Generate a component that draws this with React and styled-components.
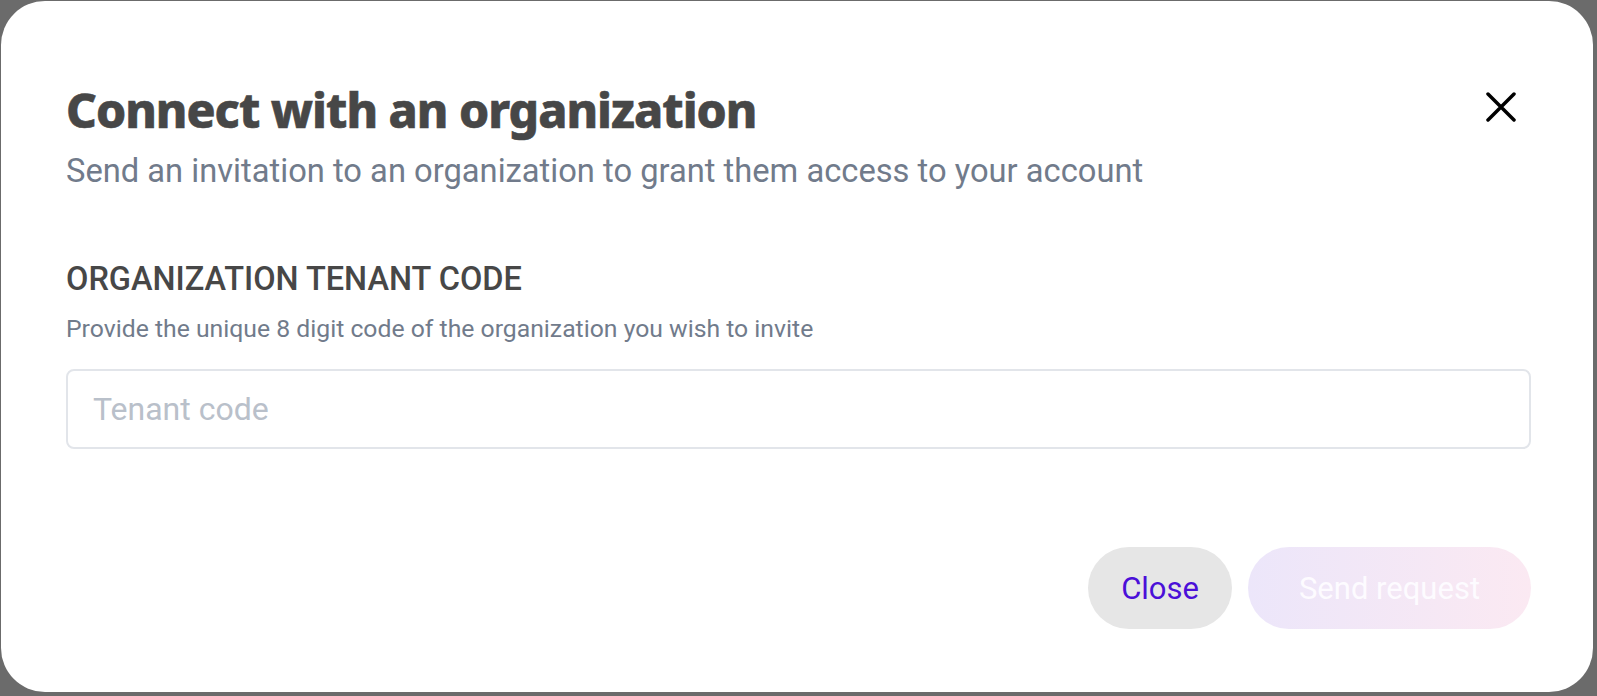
import styled, { createGlobalStyle } from "styled-components";

const GlobalStyle = createGlobalStyle`
  html, body {
    margin: 0;
    padding: 0;
    background: #6b6b6b;
  }
  * {
    box-sizing: border-box;
  }
`;

const Page = styled.div`
  width: 1597px;
  height: 696px;
  padding: 1px 4px 4px 1px;
`;

const Card = styled.div`
  width: 100%;
  height: 100%;
  background: #ffffff;
  border-radius: 44px;
  padding: 80px 62px 0 65px;
  display: flex;
  flex-direction: column;
  font-family: Roboto, "Noto Sans", sans-serif;
`;

const Header = styled.div`
  display: flex;
  justify-content: space-between;
  align-items: flex-start;
`;

const Titles = styled.div`
  display: flex;
  flex-direction: column;
`;

const Title = styled.h1`
  margin: 0;
  font-family: "Noto Sans", sans-serif;
  font-weight: 800;
  font-size: 48px;
  line-height: 58px;
  letter-spacing: -1px;
  color: #474747;
  -webkit-text-stroke: 0.6px #474747;
`;

const Subtitle = styled.p`
  margin: 13px 0 0;
  font-size: 32.7px;
  line-height: 38px;
  color: #717b8b;
`;

const IconButton = styled.button`
  width: 60px;
  height: 60px;
  margin-top: -4px;
  padding: 0;
  border: none;
  background: transparent;
  display: flex;
  align-items: center;
  justify-content: center;
  cursor: pointer;
`;

const Label = styled.label`
  margin-top: 70px;
  font-size: 32.5px;
  font-weight: 500;
  line-height: 38px;
  color: #474747;
`;

const Helper = styled.p`
  margin: 16px 0 0;
  font-size: 24.75px;
  line-height: 30px;
  color: #717b8b;
`;

const Input = styled.input`
  margin-top: 25px;
  width: 100%;
  height: 80px;
  border: 2px solid #e2e5ea;
  border-radius: 8px;
  padding: 0 25px;
  font-family: Roboto, sans-serif;
  font-size: 32px;
  color: #333;
  outline: none;

  &::placeholder {
    color: #b9c0ca;
  }
`;

const Actions = styled.div`
  margin-top: 98px;
  display: flex;
  justify-content: flex-end;
  gap: 16px;
`;

const Button = styled.button`
  height: 82px;
  min-width: ${(p) => (p.$primary ? "283px" : "0")};
  padding: 0 33px;
  border: none;
  border-radius: 41px;
  font-family: Roboto, sans-serif;
  font-size: 31px;
  cursor: pointer;
  color: ${(p) => (p.$primary ? "#fdfbff" : "#4b0fd8")};
  background: ${(p) =>
    p.$primary
      ? "linear-gradient(90deg, #ece6fa 0%, #fbe9f2 100%)"
      : "#e6e6e6"};
`;

const CloseIcon = () => (
  <svg width="30" height="30" viewBox="0 0 30 30" fill="none">
    <path
      d="M2 2 L28 28 M28 2 L2 28"
      stroke="#000"
      strokeWidth="3.5"
      strokeLinecap="round"
    />
  </svg>
);

export default function App() {
  return (
    <>
      <GlobalStyle />
      <Page>
        <Card>
          <Header>
            <Titles>
              <Title>Connect with an organization</Title>
              <Subtitle>
                Send an invitation to an organization to grant them access to
                your account
              </Subtitle>
            </Titles>
            <IconButton aria-label="Close">
              <CloseIcon />
            </IconButton>
          </Header>
          <Label htmlFor="tenant">ORGANIZATION TENANT CODE</Label>
          <Helper>
            Provide the unique 8 digit code of the organization you wish to
            invite
          </Helper>
          <Input id="tenant" placeholder="Tenant code" />
          <Actions>
            <Button>Close</Button>
            <Button $primary disabled>
              Send request
            </Button>
          </Actions>
        </Card>
      </Page>
    </>
  );
}
